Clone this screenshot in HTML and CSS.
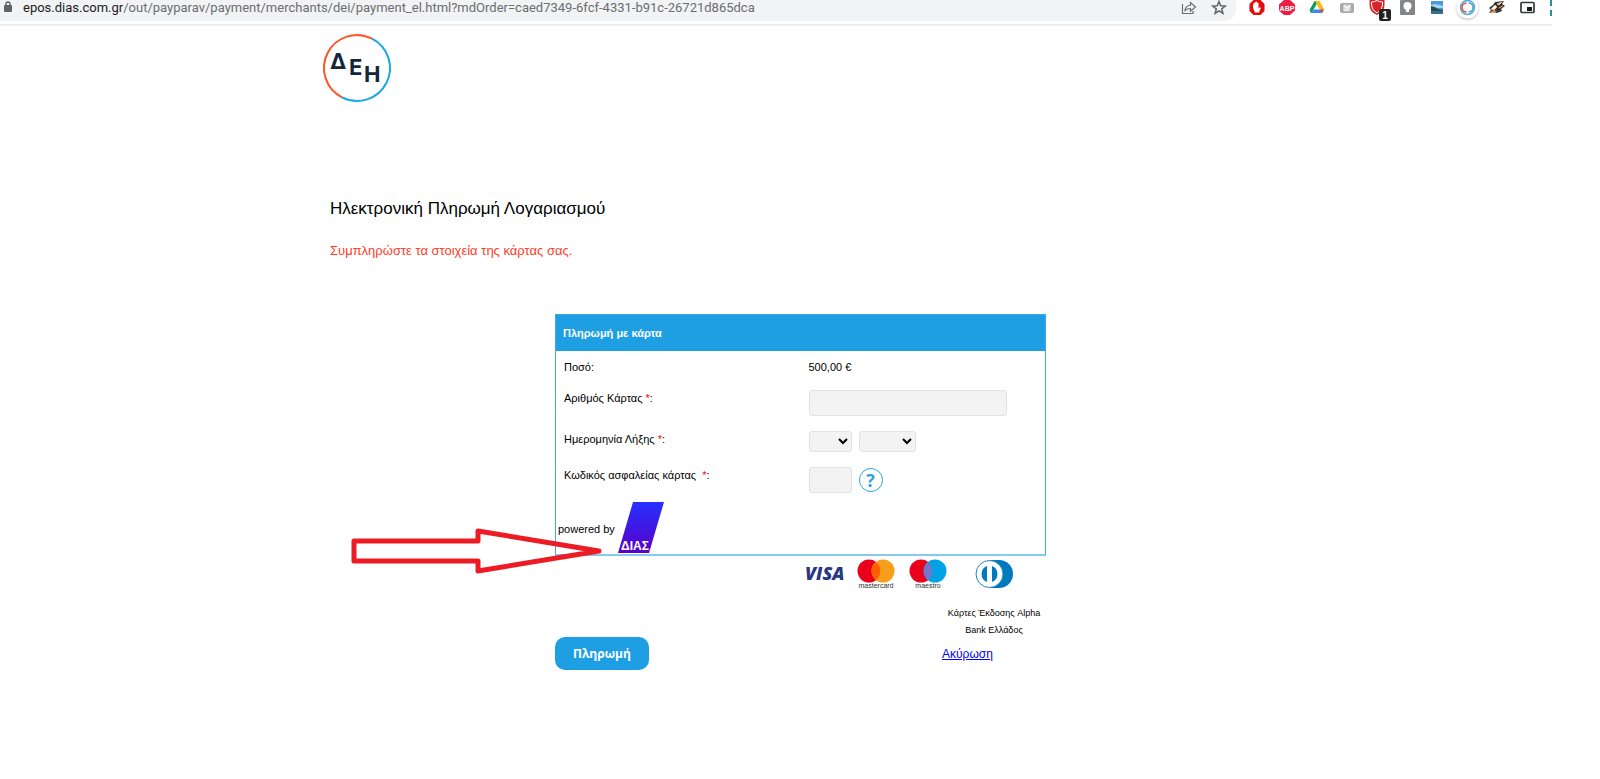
FILE: index.html
```
<!DOCTYPE html>
<html lang="el">
<head>
	<meta charset="UTF-8">
	<meta name="viewport" content="width=device-width, initial-scale=1.0">
	<title>Ηλεκτρονική Πληρωμή Λογαριασμού</title>
	<link rel="stylesheet" href="styles.css">
</head>
<body>
	<header class="toolbar">
		<div class="omnibox">
			<svg class="lock" width="8" height="14" viewBox="0 0 8 14"><path d="M2 6V4a2 2 0 0 1 4 0v2" fill="none" stroke="#5f6368" stroke-width="1.4"/><rect y="5" width="8" height="7" rx="1" fill="#5f6368"/></svg>
			<div class="url"><span class="host">epos.dias.com.gr</span>/out/payparav/payment/merchants/dei/payment_el.html?mdOrder=caed7349-6fcf-4331-b91c-26721d865dca</div>
			<svg class="tool" viewBox="0 0 30 24"><path d="M8.500 4v9.500h10.500v-2.500M11 10.500c.3-3.500 2.500-5 5.500-5V2.500l5 4.500-5 4.200V8.500c-2.500 0-4 .5-5.500 2z" fill="none" stroke="#6b6f73" stroke-width="1.200"/></svg>
			<svg class="tool" viewBox="0 0 30 24"><path d="M15 1.500l1.700 4.200 4.500.3-3.500 2.900 1.200 4.400-3.900-2.500-3.900 2.500 1.200-4.400L8.800 6l4.500-.3z" fill="none" stroke="#5f6368" stroke-width="1.500"/></svg>
		</div>
		<div class="extensions">
			<svg class="tool" viewBox="0 0 30 24"><path d="M11.500 0h7l4 4v7l-4 4h-7l-4-4V4z" fill="#e40d0d"/><path d="M11 8V4q1-1 1.300 0v3V2.500q1-1 1.400 0V7V2q1-1 1.400 0v5V3q1-1 1.400 0v5.500l1.500-1.300q1.200 0 .7 1L17 12.500h-4z" fill="#fff"/></svg>
			<svg class="tool" viewBox="0 0 30 24"><path d="M12 0h6l5 4.500v6L18 15h-6l-5-4.500v-6z" fill="#ed1e45"/><text class="abp" x="15" y="10.500">ABP</text></svg>
			<svg class="tool" viewBox="0 0 30 24"><path d="M12.500 1h4L11.500 9.500l-2.300 4L7.500 10z" fill="#0f9d58"/><path d="M13 1h4.500l4.500 8h-4.500z" fill="#fbbc04"/><path d="M11.500 9.500H22L20 13H9.400z" fill="#4285f4"/><path d="M17.500 9.500H22L20 13z" fill="#ea4335"/></svg>
			<svg class="tool" viewBox="0 0 30 24"><rect x="8" y="3" width="14" height="10" rx="2" fill="#a8a8a8"/><rect x="11" y="4.500" width="8" height="7" rx="1" fill="#d0d0d0"/><path d="M12 5.500l3 3 3-3M12 10h5" fill="none" stroke="#fff" stroke-width="1.200"/></svg>
			<svg class="tool wide" viewBox="0 0 30 24"><path d="M7.500 0h15v5q0 7-7.500 10Q7.500 12 7.500 5z" fill="#d9252a"/><path d="M9.500 2q3 0 5.500-1.500Q17.500 2 20.500 2v3q0 5-5.500 8Q9.500 10 9.500 5z" fill="none" stroke="#fff"/><rect x="17" y="9" width="12" height="12" rx="2" fill="#222"/><text class="badge" x="23" y="19">1</text></svg>
			<svg class="tool" viewBox="0 0 30 24"><rect x="8" width="15" height="15" rx="1" fill="#80868b"/><circle cx="15.500" cy="6" r="4" fill="#fff"/><path d="M14 9h3v3h-3z" fill="#fff"/></svg>
			<svg class="tool" viewBox="0 0 30 24"><path d="M9 1h12v13H9z" fill="#4b98dc"/><path d="M9 5q5-2 12 1v2H9z" fill="#a9d3ef"/><path d="M9 6q5 1 7 3l5 1v4H9z" fill="#245344"/><path d="M9 11h12v3H9z" fill="#376d9b"/></svg>
			<svg class="tool wide" viewBox="0 0 30 24"><circle class="halo" cx="15.500" cy="7.500" r="11" fill="#fff"/><circle cx="15.500" cy="7.500" r="7" fill="none" stroke="#4ba9d2" stroke-width="1.500"/><path d="M14.500 3a4.500 4.500 0 0 0 0 9" fill="none" stroke="#e04040" stroke-width="1.500"/><path d="M16.500 3a4.500 4.500 0 0 1 0 9" fill="none" stroke="#4b9ac8" stroke-width="1.500"/></svg>
			<svg class="tool" viewBox="0 0 30 24"><path d="M7 8l4-3 2-3 9-1-2 3 3 2-4 3 1 2-5 2-4-1-4 1 2-3z" fill="#373130"/><path d="M9 9l4-4 2 2-3 3zM15 4l5-2-3 3zM17 8l4-2" fill="#fff" stroke="#ddb18a"/><path d="M8 12l4-2 3 1-4 2z" fill="#df8d50"/></svg>
			<svg class="tool" viewBox="0 0 30 24"><rect x="9" y="2.500" width="13" height="10" rx="1" fill="#fff" stroke="#34373b" stroke-width="1.700"/><path d="M15 7h5v4h-5z" fill="#17191b"/></svg>
		</div>
		<span class="edge"></span>
	</header>

	<main class="page">
		<svg class="logo" width="68" height="68" viewBox="0 0 68 68" role="img" aria-label="ΔΕΗ">
			<path d="M49 4.600A33 33 0 1 0 19 63.400" fill="none" stroke="#ff5426" stroke-width="2"/>
			<path d="M49 4.600A33 33 0 0 1 19 63.400" fill="none" stroke="#17a9e3" stroke-width="2"/>
			<text class="logo-text" x="7" y="35">Δ</text>
			<text class="logo-text" x="26" y="41">Ε</text>
			<text class="logo-text" x="41" y="48">Η</text>
		</svg>
		<h1>Ηλεκτρονική Πληρωμή Λογαριασμού</h1>
		<p class="notice">Συμπληρώστε τα στοιχεία της κάρτας σας.</p>

		<form class="payment">
			<section class="panel">
				<h2>Πληρωμή με κάρτα</h2>
				<div class="row amount">
					<span>Ποσό:</span>
					<span>500,00 €</span>
				</div>
				<div class="row">
					<label for="pan">Αριθμός Κάρτας <b>*</b>:</label>
					<input id="pan" class="pan" type="text">
				</div>
				<div class="row">
					<label for="month">Ημερομηνία Λήξης <b>*</b>:</label>
					<div class="fields">
						<select id="month" class="month"><option></option></select>
						<select class="year" aria-label="Έτος"><option></option></select>
					</div>
				</div>
				<div class="row">
					<label for="cvc">Κωδικός ασφαλείας κάρτας &nbsp;<b>*</b>:</label>
					<div class="fields">
						<input id="cvc" class="cvc" type="text">
						<button class="help" type="button">?</button>
					</div>
				</div>
				<div class="powered">
					<span>powered by</span>
					<svg width="48" height="52" viewBox="0 0 48 52">
						<defs><linearGradient id="dias" x2="0" y2="1"><stop stop-color="#2630ff"/><stop offset="1" stop-color="#5a00c8"/></linearGradient></defs>
						<path d="M16 0h31L32 51H1z" fill="url(#dias)"/>
						<text class="dias-text" x="4" y="48">ΔΙΑΣ</text>
					</svg>
				</div>
				<svg class="arrow" width="252" height="46" viewBox="0 0 252 46"><path d="M3 13h124V3l121 20-121 20V33H3z" fill="none" stroke="#ed1c24" stroke-width="5" stroke-linejoin="round"/></svg>
			</section>

			<div class="cards">
				<svg width="38" height="30" viewBox="0 0 38 30"><text class="visa" x="0" y="20">VISA</text></svg>
				<svg width="38" height="30" viewBox="0 0 38 30"><circle cx="12" cy="11" r="11.500" fill="#eb001b"/><circle cx="26" cy="11" r="11.500" fill="#f79e1b"/><path d="M19 2a11.500 11.500 0 0 1 0 18 11.500 11.500 0 0 1 0-18z" fill="#ff5f00"/><text class="brand" x="19" y="28">mastercard</text></svg>
				<svg width="38" height="30" viewBox="0 0 38 30"><circle cx="12" cy="11" r="11.500" fill="#eb001b"/><circle cx="26" cy="11" r="11.500" fill="#00a2e5"/><path d="M19 2a11.500 11.500 0 0 1 0 18 11.500 11.500 0 0 1 0-18z" fill="#7375cf"/><text class="brand" x="19" y="28">maestro</text></svg>
				<svg class="diners" width="38" height="30" viewBox="0 0 38 30"><path d="M14 0h10a14 14 0 0 1 0 28H14z" fill="#0079be"/><circle cx="14.500" cy="14" r="13.500" fill="#fff" stroke="#2587c3"/><path d="M12 6a8.600 8.600 0 0 0 0 16zM17 6a8.600 8.600 0 0 1 0 16z" fill="#0079be"/></svg>
			</div>
			<p class="issuer">Κάρτες Έκδοσης Alpha Bank Ελλάδος</p>
			<div class="actions">
				<button class="pay" type="button">Πληρωμή</button>
				<a href="#">Ακύρωση</a>
			</div>
		</form>
	</main>
</body>
</html>
```
FILE: styles.css
```
* {
	box-sizing: border-box;
}

body {
	margin: 0;
	background: #fff;
	color: #000;
	font-family: "Liberation Sans", Arial, sans-serif;
	font-size: 11px;
}

svg {
	display: block;
	flex: none;
	overflow: visible;
}

/* browser toolbar */
.toolbar {
	display: flex;
	align-items: flex-start;
	height: 26px;
	margin-right: 48px;
	border-bottom: 2px solid #eee;
}

.omnibox {
	flex: 1;
	min-width: 0;
	display: flex;
	align-items: flex-start;
	height: 21px;
	padding: 0 2px 0 4px;
	margin-right: 6px;
	background: #f1f3f4;
	border-radius: 0 0 12px 0;
}

.url {
	flex: 1;
	min-width: 0;
	margin-left: 11px;
	overflow: hidden;
	white-space: nowrap;
	font-family: Roboto, sans-serif;
	font-size: 13px;
	line-height: 16px;
	color: #6c6e71;
}

.host {
	color: #202124;
}

.extensions {
	display: flex;
}

.tool {
	width: 30px;
	height: 24px;
	overflow: hidden;
}

.wide {
	overflow: visible;
}

.halo {
	filter: drop-shadow(0 1px 1px #bbb);
}

.abp {
	font-size: 7px;
	font-weight: bold;
	fill: #fff;
	text-anchor: middle;
}

.badge {
	font-size: 10px;
	font-weight: bold;
	fill: #fff;
	text-anchor: middle;
}

.edge {
	height: 16px;
	margin-left: 8px;
	border-left: 2px dashed #2b8d96;
}

/* page */
.page {
	max-width: 956px;
	margin: 0 auto;
	padding: 8px 0 0 1px;
}

.logo-text {
	font-family: Inter, sans-serif;
	font-size: 22px;
	font-weight: 700;
	fill: #13273a;
}

h1 {
	margin: 97px 7px 0;
	font-size: 17px;
	font-weight: normal;
	line-height: 20px;
}

.notice {
	margin: 24px 7px 0;
	font-size: 13px;
	line-height: 16px;
	color: #ff3b1f;
}

.payment {
	max-width: 491px;
	margin: 55px auto 0;
}

.panel {
	position: relative;
	display: flex;
	flex-direction: column;
	border: 1px solid #3eabe5;
	border-bottom: 2px solid #85cbf0;
}

h2 {
	margin: 0;
	padding: 0 7px;
	background: #1e9fe4;
	color: #fff;
	font-size: 11px;
	line-height: 36px;
}

.row {
	display: grid;
	grid-template-columns: 1fr 1fr;
	padding: 0 8px;
	line-height: 16px;
	margin-bottom: 15px;
}

.row > :last-child {
	margin-left: 8px;
}

.row b {
	font-weight: normal;
	color: #f00;
}

.amount {
	padding-top: 8px;
}

.fields {
	display: flex;
	align-items: center;
	gap: 7px;
}

input,
select {
	height: 26px;
	border: 1px solid #e2e2e2;
	border-radius: 3px;
	background: #f3f3f3;
	font: inherit;
}

select {
	height: 21px;
}

.pan {
	width: 198px;
}

.month {
	width: 43px;
}

.year {
	width: 57px;
}

.cvc {
	width: 43px;
}

.help {
	width: 24px;
	height: 24px;
	padding: 0;
	border: 1px solid #2ca4e4;
	border-radius: 50%;
	background: #fff;
	color: #2ca4e4;
	font: bold 18px/20px "Open Sans", sans-serif;
}

.powered {
	display: flex;
	align-items: center;
	padding: 0 1px;
	margin-top: -6px;
}

.powered span {
	margin: 2px 2px 0 1px;
}

.dias-text {
	font-size: 12px;
	font-weight: bold;
	fill: #fff;
}

/* pointer laid over the panel */
.arrow {
	position: absolute;
	right: calc(100% - 47px);
	bottom: -20px;
}

.cards {
	display: flex;
	gap: 14px;
	margin-top: 4px;
	padding-left: 250px;
}

.diners {
	margin-left: 14px;
}

.visa {
	font-family: "Open Sans", sans-serif;
	font-size: 18px;
	font-weight: 800;
	font-style: italic;
	fill: #26397f;
}

.brand {
	font-size: 7px;
	fill: #333;
	text-anchor: middle;
}

.issuer {
	width: 104px;
	margin: 15px 0 -2px auto;
	font-size: 9px;
	line-height: 17px;
	text-align: center;
}

.actions {
	display: grid;
	grid-template-columns: 387px 1fr;
	align-items: center;
	justify-items: start;
	font-size: 12px;
}

.actions a {
	color: #00f;
}

.pay {
	height: 33px;
	padding: 0 18px;
	border: 0;
	border-radius: 10px;
	background: #1e9fe4;
	color: #fff;
	font: bold 12px "Open Sans", sans-serif;
}
```
